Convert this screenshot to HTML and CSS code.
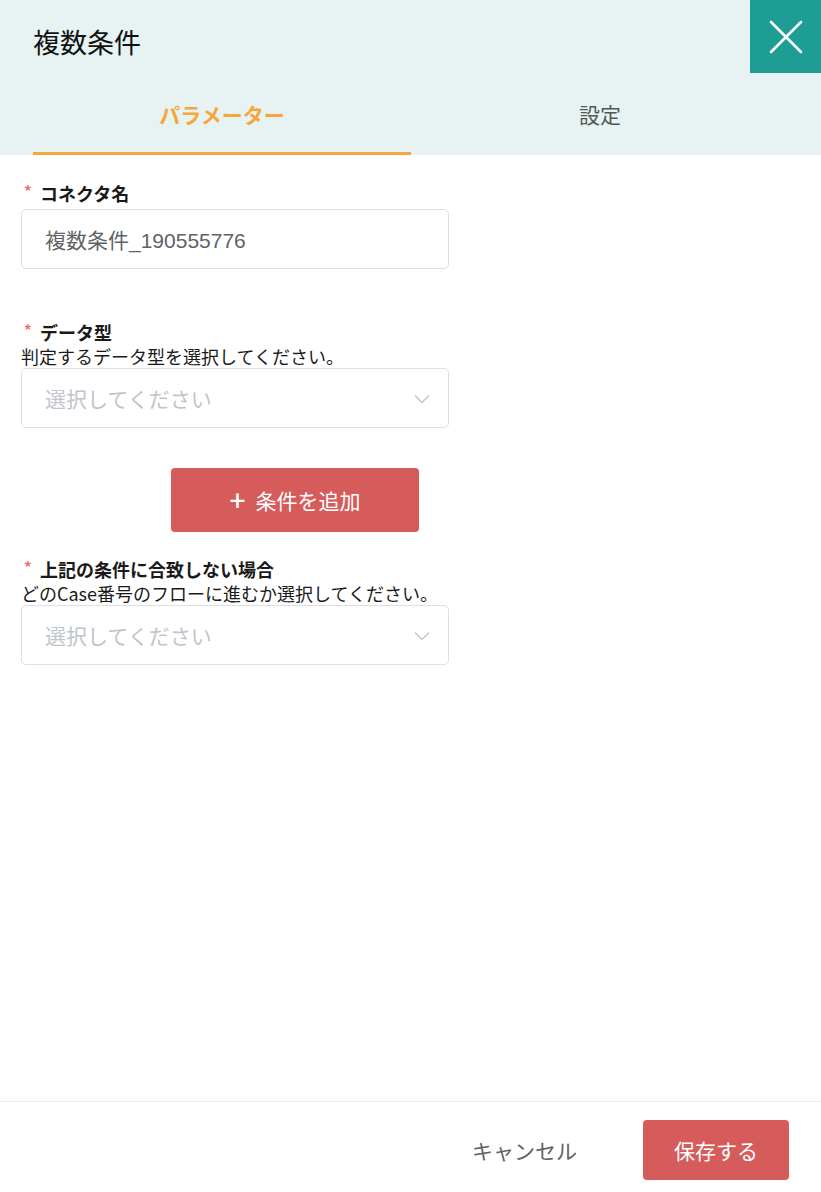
FILE: index.html
```html
<!DOCTYPE html>
<html lang="ja">
<head>
<meta charset="utf-8">
<title>複数条件</title>
<link rel="stylesheet" href="styles.css">
</head>
<body>
<div class="panel">
  <header class="head">
    <div class="title-row">
      <h1 class="title">複数条件</h1>
      <button class="close" aria-label="閉じる">
        <svg width="34" height="34" viewBox="0 0 34 34"><path d="M2 2 L32 32 M32 2 L2 32" stroke="#fff" stroke-width="2.6" stroke-linecap="round" fill="none"/></svg>
      </button>
    </div>
    <nav class="tabs">
      <div class="tab active">パラメーター</div>
      <div class="tab">設定</div>
    </nav>
  </header>

  <main class="body">
    <div class="field first">
      <div class="label"><span class="req">*</span>コネクタ名</div>
      <div class="input"><span class="value">複数条件_190555776</span></div>
    </div>

    <div class="field second">
      <div class="label"><span class="req">*</span>データ型</div>
      <div class="desc">判定するデータ型を選択してください。</div>
      <div class="input select">
        <span class="placeholder">選択してください</span>
        <svg class="chev" width="16" height="10" viewBox="0 0 16 10"><path d="M1 1.5 L8 8.5 L15 1.5" stroke="#c0c4cc" stroke-width="1.3" fill="none"/></svg>
      </div>
    </div>

    <div class="add-row">
      <button class="btn-add"><span class="plus">+</span>条件を追加</button>
    </div>

    <div class="field third">
      <div class="label"><span class="req">*</span>上記の条件に合致しない場合</div>
      <div class="desc">どのCase番号のフローに進むか選択してください。</div>
      <div class="input select">
        <span class="placeholder">選択してください</span>
        <svg class="chev" width="16" height="10" viewBox="0 0 16 10"><path d="M1 1.5 L8 8.5 L15 1.5" stroke="#c0c4cc" stroke-width="1.3" fill="none"/></svg>
      </div>
    </div>
  </main>

  <footer class="foot">
    <button class="btn-cancel">キャンセル</button>
    <button class="btn-save">保存する</button>
  </footer>
</div>
</body>
</html>
```

FILE: styles.css
```css
* { box-sizing: border-box; }
html, body { margin: 0; padding: 0; }
body {
  font-family: "Noto Sans CJK JP", "Noto Sans", sans-serif;
  background: #fff;
  color: #1f1f1f;
}
.panel {
  width: 821px;
  height: 1192px;
  display: flex;
  flex-direction: column;
}
.head {
  background: #e6f3f2;
  height: 155px;
  display: flex;
  flex-direction: column;
}
.title-row {
  height: 73px;
  display: flex;
  align-items: center;
  justify-content: space-between;
}
.title {
  margin: 0 0 0 33px;
  font-size: 27px;
  font-weight: 400;
  color: #111;
  line-height: 1;
  padding-top: 10px;
}
.close {
  width: 71px;
  height: 73px;
  border: 0;
  padding: 0;
  background: #1e9d94;
  display: flex;
  align-items: center;
  justify-content: center;
}
.tabs {
  flex: 1;
  display: flex;
  padding-left: 33px;
}
.tab {
  width: 378px;
  display: flex;
  align-items: center;
  justify-content: center;
  font-size: 21px;
  color: #555;
  border-bottom: 3px solid transparent;
  padding-top: 2px;
}
.tab.active {
  color: #f5a73b;
  font-weight: 700;
  border-bottom-color: #f5a73b;
}
.body {
  flex: 1;
  padding: 26px 0 0 21px;
}
.field { width: 428px; }
.label {
  font-size: 18px;
  font-weight: 700;
  line-height: 24px;
  color: #1a1a1a;
  display: flex;
  align-items: center;
}
.req {
  color: #f56c6c;
  font-size: 15px;
  width: 19px;
  padding-left: 3px;
  margin-top: -4px;
}
.desc {
  font-size: 18px;
  line-height: 24px;
  color: #1a1a1a;
  white-space: nowrap;
}
.input {
  height: 60px;
  border: 1px solid #dcdfe6;
  border-radius: 5px;
  display: flex;
  align-items: center;
  padding: 0 18px 0 23px;
  margin-top: 4px;
}
.field.second { margin-top: 51px; }
.field.second .input, .field.third .input { margin-top: 0; }
.value {
  font-family: "Liberation Sans", "Noto Sans CJK JP", sans-serif;
  font-size: 21px;
  color: #606266;
}
.select { justify-content: space-between; }
.placeholder {
  font-size: 21px;
  color: #c0c4cc;
}
.chev { margin-top: 2px; }
.add-row {
  width: 428px;
  padding: 40px 0 0 150px;
}
.btn-add {
  width: 248px;
  height: 64px;
  border: 0;
  border-radius: 4px;
  background: #d65c5b;
  color: #fff;
  font-family: "Noto Sans CJK JP", sans-serif;
  font-size: 21px;
  display: flex;
  align-items: center;
  justify-content: center;
}
.plus {
  font-size: 28px;
  font-weight: 500;
  margin-right: 10px;
  line-height: 1;
  margin-top: -3px;
}
.field.third { margin-top: 25px; }
.foot {
  height: 91px;
  border-top: 1px solid #ebeef5;
  display: flex;
  justify-content: flex-end;
  align-items: flex-start;
  padding: 18px 32px 0 0;
}
.btn-cancel {
  height: 60px;
  border: 0;
  background: transparent;
  font-family: "Noto Sans CJK JP", sans-serif;
  font-size: 21px;
  color: #606266;
  padding: 0 20px;
  margin-right: 46px;
}
.btn-save {
  width: 146px;
  height: 60px;
  border: 0;
  border-radius: 4px;
  background: #d65c5b;
  color: #fff;
  font-family: "Noto Sans CJK JP", sans-serif;
  font-size: 21px;
  font-weight: 400;
}
```
